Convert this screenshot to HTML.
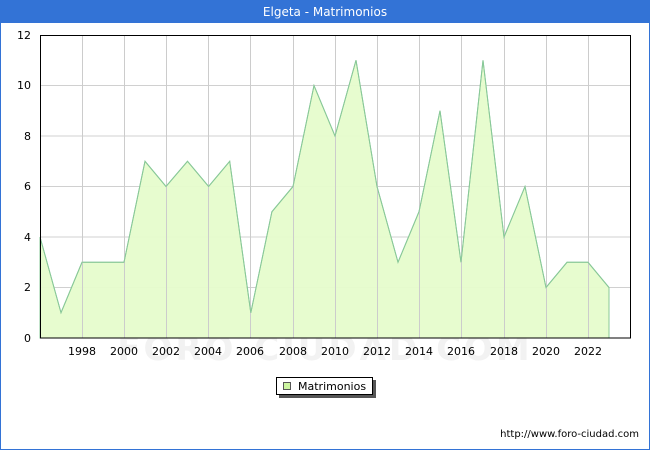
<!DOCTYPE html>
<html><head><meta charset="utf-8"><style>
body{margin:0;width:650px;height:450px;overflow:hidden;background:#fff;font-family:"DejaVu Sans","Liberation Sans",sans-serif}
</style></head><body>
<svg width="650" height="450" xmlns="http://www.w3.org/2000/svg" font-family="DejaVu Sans, Liberation Sans, sans-serif">
<rect x="0.5" y="0.5" width="649" height="449" fill="#fff" stroke="#3373d6"/>
<rect x="0" y="0" width="650" height="23" fill="#3373d6"/>
<text x="325" y="16" text-anchor="middle" fill="#fff" font-size="12">Elgeta - Matrimonios</text>
<text x="325" y="360" text-anchor="middle" fill="#f2f2f2" font-size="34" font-weight="bold" letter-spacing="3">FORO-CIUDAD.COM</text>
<g stroke="#d0d0d0" stroke-width="1">
<line x1="40" y1="287.5" x2="630" y2="287.5"/><line x1="40" y1="237" x2="630" y2="237"/><line x1="40" y1="186.5" x2="630" y2="186.5"/><line x1="40" y1="136" x2="630" y2="136"/><line x1="40" y1="85.5" x2="630" y2="85.5"/>
</g>
<polygon fill="#e6fccc" fill-opacity="0.95" stroke="#88c898" stroke-width="1" points="40,338 40,237 61,312.75 82,262.25 103,262.25 124,262.25 145,161.25 166,186.5 187.5,161.25 208.6,186.5 229.7,161.25 250.8,312.75 271.9,211.75 293,186.5 314,85.5 335,136 356,60.25 377,186.5 398,262.25 419,211.75 440,110.75 461,262.25 483,60.25 504,237 525,186.5 546,287.5 567,262.25 588,262.25 609,287.5 609,338"/>
<g stroke="#cccccc" stroke-width="1">
<line x1="82.5" y1="35" x2="82.5" y2="338"/><line x1="124.5" y1="35" x2="124.5" y2="338"/><line x1="166.5" y1="35" x2="166.5" y2="338"/><line x1="208.5" y1="35" x2="208.5" y2="338"/><line x1="250.5" y1="35" x2="250.5" y2="338"/><line x1="293.5" y1="35" x2="293.5" y2="338"/><line x1="335.5" y1="35" x2="335.5" y2="338"/><line x1="377.5" y1="35" x2="377.5" y2="338"/><line x1="419.5" y1="35" x2="419.5" y2="338"/><line x1="461.5" y1="35" x2="461.5" y2="338"/><line x1="504.5" y1="35" x2="504.5" y2="338"/><line x1="546.5" y1="35" x2="546.5" y2="338"/><line x1="588.5" y1="35" x2="588.5" y2="338"/>
</g>
<polyline fill="none" stroke="#88c898" stroke-width="1" points="40,237 61,312.75 82,262.25 103,262.25 124,262.25 145,161.25 166,186.5 187.5,161.25 208.6,186.5 229.7,161.25 250.8,312.75 271.9,211.75 293,186.5 314,85.5 335,136 356,60.25 377,186.5 398,262.25 419,211.75 440,110.75 461,262.25 483,60.25 504,237 525,186.5 546,287.5 567,262.25 588,262.25 609,287.5"/>
<rect x="40.5" y="35.5" width="590" height="302.5" fill="none" stroke="#000" stroke-width="1"/>
<g font-size="11" fill="#000" text-anchor="end">
<text x="31" y="342">0</text><text x="31" y="291">2</text><text x="31" y="241">4</text><text x="31" y="190">6</text><text x="31" y="140">8</text><text x="31" y="89">10</text><text x="31" y="39">12</text>
</g>
<g font-size="11" fill="#000" text-anchor="middle">
<text x="82" y="355">1998</text><text x="124" y="355">2000</text><text x="166" y="355">2002</text><text x="208" y="355">2004</text><text x="250" y="355">2006</text><text x="293" y="355">2008</text><text x="335" y="355">2010</text><text x="377" y="355">2012</text><text x="419" y="355">2014</text><text x="461" y="355">2016</text><text x="504" y="355">2018</text><text x="546" y="355">2020</text><text x="588" y="355">2022</text>
</g>
<rect x="279" y="380" width="97" height="18" fill="#555"/>
<rect x="276.5" y="377.5" width="96" height="17" fill="#fff" stroke="#000"/>
<rect x="283.5" y="382.5" width="7" height="7" fill="#ccf5a0" stroke="#555"/>
<text x="298" y="390" font-size="11" fill="#000">Matrimonios</text>
<text x="639" y="437" text-anchor="end" font-size="10" fill="#000">http://www.foro-ciudad.com</text>
</svg>
</body></html>
